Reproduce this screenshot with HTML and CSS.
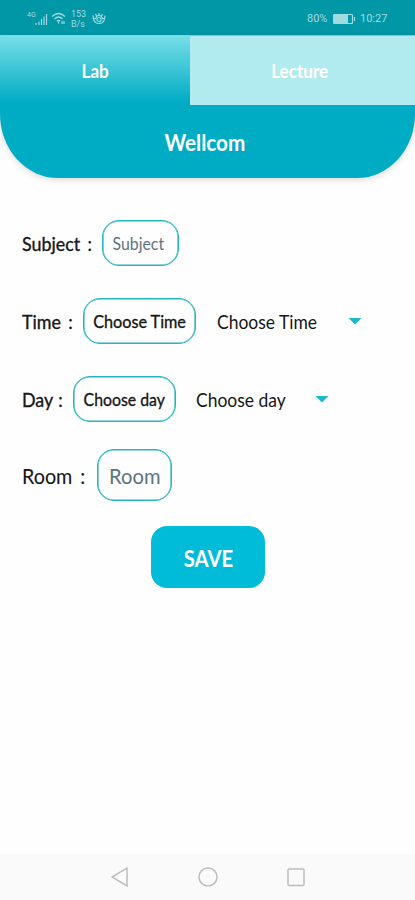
FILE: index.html
```html
<!DOCTYPE html>
<html lang="en">
<head>
<meta charset="utf-8">
<meta name="viewport" content="width=device-width, initial-scale=1">
<title>Lab</title>
<link rel="stylesheet" href="styles.css">
</head>
<body>
<div class="screen">
  <div class="status">
    <span class="network">4G</span>
    <svg class="signal" width="13" height="12" viewBox="0 0 13 12"><path d="M1 12v-2M4 12V8.500M6.500 12V6M9 12V3.500M11.500 12V1"/></svg>
    <svg class="wifi" width="15" height="13" viewBox="0 0 15 13"><path d="M1 4.500Q7.500-1.500 14 4.500M3.500 7Q7.500 3 11.500 7M5.800 9.200Q7.500 7.500 9.200 9.200M7.500 9.500v2M11 9v3M13 9v3"/></svg>
    <span class="rate"><span>153</span><span>B/s</span></span>
    <svg class="eye" width="14" height="13" viewBox="0 0 14 13"><path d="M1 3.500Q1 11.500 7 11.500Q13 11.500 13 3.500M1 6Q4 8 4.500 4.500Q7 2.500 9.500 4.500Q10 8 13 6M7 3V1M4.500 4L3.500 2M9.500 4l1-2"/><circle cx="7" cy="7.500" r="2"/></svg>
    <span class="percent">80%</span>
    <svg class="battery" width="23" height="10" viewBox="0 0 23 10"><rect x=".5" y=".5" width="19" height="9" rx="1"/><path class="charge" d="M1 1h14v8H1z"/><path d="M21.500 3v4"/></svg>
    <span class="clock">10:27</span>
  </div>
  <header class="header">
    <nav class="tabs">
      <a class="tab active"><span>Lab</span></a>
      <a class="tab lecture"><span>Lecture</span></a>
    </nav>
    <h1 class="title"><span>Wellcom</span></h1>
  </header>
  <main class="form">
    <div class="row subject">
      <label>Subject :</label>
      <div class="field muted"><span>Subject</span></div>
    </div>
    <div class="row time">
      <label>Time :</label>
      <div class="field"><span>Choose Time</span></div>
      <div class="select"><span>Choose Time</span><i class="arrow"></i></div>
    </div>
    <div class="row day">
      <label>Day :</label>
      <div class="field"><span>Choose day</span></div>
      <div class="select"><span>Choose day</span><i class="arrow"></i></div>
    </div>
    <div class="row room">
      <label>Room :</label>
      <div class="field muted"><span>Room</span></div>
    </div>
    <button class="save"><span>SAVE</span></button>
  </main>
  <footer class="navbar">
    <svg width="20" height="22" viewBox="0 0 20 22"><path d="M17 2v18L2 11z"/></svg>
    <svg width="20" height="22" viewBox="0 0 20 22"><circle cx="10" cy="11" r="9"/></svg>
    <svg width="20" height="22" viewBox="0 0 20 22"><rect x="2" y="3" width="16" height="16.500" rx="1"/></svg>
  </footer>
</div>
</body>
</html>
```
FILE: styles.css
```css
* { box-sizing: border-box; }
body { margin: 0; background: #fefefe; font-family: Lato, "Open Sans", sans-serif; color: #161616; }
.screen { width: 415px; height: 900px; display: flex; flex-direction: column; overflow: hidden; }
svg { display: block; flex: none; fill: none; }

.status { height: 35px; flex: none; display: flex; align-items: center; background: #0097a7; color: #a0dbe1; padding: 2px 27px 0 27px; font: 11px Roboto, sans-serif; }
.status svg { stroke: #a0dbe1; stroke-width: 1.2; }
.network { width: 8px; font-size: 7px; align-self: flex-start; margin-top: 9px; }
.wifi { margin-left: 3px; }
.rate { display: flex; flex-direction: column; width: 15px; margin-left: 5px; font-size: 9px; line-height: 10px; }
.eye { margin-left: 6px; }
.percent { margin-left: auto; width: 22px; }
.battery { margin: 0 4px; }
.battery .charge { fill: #a0dbe1; stroke: none; }
.clock { width: 28px; white-space: nowrap; }

.header { height: 143px; flex: none; background: #00acc4; border-radius: 0 0 58px 58px / 0 0 64px 64px; box-shadow: 0 2px 6px rgba(0, 0, 0, .14); color: #fff; font-weight: 700; }
.header span, .save span, .field span { display: inline-block; transform: scaleX(.9); }
.tabs { display: flex; height: 70px; }
.tab { display: flex; align-items: center; justify-content: center; font-size: 19px; padding-top: 1px; }
.tab.active { width: 190px; background: linear-gradient(#78dfe8, #00acc4 96%); }
.tab.lecture { flex: 1; background: #b2ebef; border-top: 1px solid #6ccfd7; padding: 0 5px 0 0; }
.title { height: 73px; margin: 0; display: flex; align-items: center; justify-content: center; font-size: 23px; padding: 0 5px 0 0; }

.form { flex: 1; display: flex; flex-direction: column; padding: 42px 22px 0; }
.row { display: flex; align-items: center; font-size: 19px; white-space: nowrap; }
.row label { flex: none; transform: scaleX(.94); transform-origin: left; word-spacing: 2px; -webkit-text-stroke: .35px #161616; }
.field { display: flex; align-items: center; justify-content: center; flex: none; border: 1px solid #25b4c3; box-shadow: inset 0 0 0 .6px #25b4c3; border-radius: 17px; font-size: 18px; -webkit-text-stroke: .35px #161616; }
.field.muted { color: #5b7380; -webkit-text-stroke: 0; }
.select { display: flex; align-items: center; }
.select span { transform: scaleX(.92); transform-origin: left; }
.arrow { flex: none; width: 14px; height: 7px; background: #19b9ca; clip-path: polygon(0 0, 100% 0, 50% 100%); }

.subject { height: 46px; }
.subject label { width: 80px; word-spacing: 3px; }
.subject .field { width: 77px; height: 46px; padding-right: 4px; }
.subject .field span { transform: scaleX(.88); }
.time { height: 46px; margin-top: 32px; }
.time label { width: 61px; word-spacing: 3px; }
.time .field { width: 113px; height: 46px; }
.time .select { margin-left: 21px; }
.time .select span { width: 131px; }
.day { height: 46px; margin-top: 32px; }
.day label { width: 51px; word-spacing: 1px; }
.day .field { width: 103px; height: 46px; }
.day .field span { transform: scaleX(.88); }
.day .select { margin-left: 20px; }
.day .select span { width: 119px; }
.room { height: 52px; margin-top: 27px; font-size: 21px; }
.room label { width: 75px; word-spacing: 3px; -webkit-text-stroke: .1px #161616; }
.room .field { width: 75px; height: 52px; font-size: 21px; }
.room .field span { transform: scaleX(.96); }

.save { width: 114px; height: 62px; margin: 25px 0 0 129px; padding: 3px 0 0; border: 0; border-radius: 16px; background: #00bcd8; color: #fff; font: 700 22.5px Lato, sans-serif; }

.navbar { height: 46px; flex: none; display: flex; align-items: center; justify-content: center; gap: 68px; background: #fafafa; }
.navbar svg { stroke: #bdbdbd; stroke-width: 1.5; }
```
